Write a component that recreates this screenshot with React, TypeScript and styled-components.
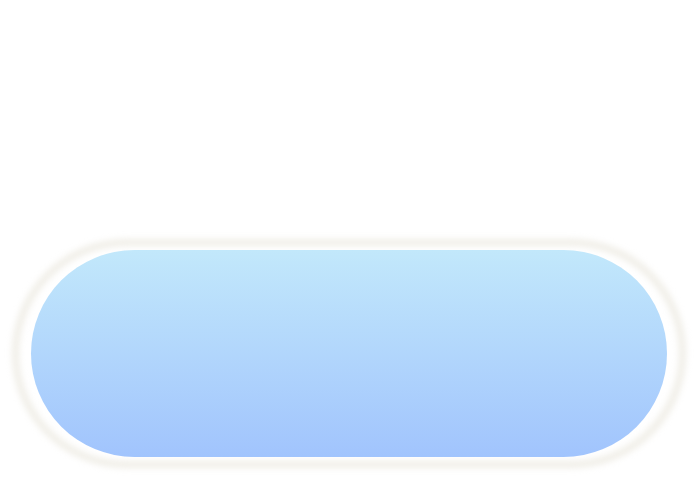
import React from "react";
import styled, { createGlobalStyle } from "styled-components";

const Global = createGlobalStyle`
  html, body { margin: 0; padding: 0; background: #ffffff; }
  body { font-family: "Liberation Sans", Arial, sans-serif; }
`;

const Page = styled.div`
  width: 700px;
  height: 500px;
  box-sizing: border-box;
  padding: 243px 18px 0 16px;
  display: flex;
  flex-direction: column;
`;

const Frame = styled.div`
  position: relative;
  display: flex;
  padding: 7px 15px;

  &::before {
    content: "";
    position: absolute;
    inset: -4px;
    border: 7px solid rgba(230, 228, 216, 0.62);
    border-radius: 9999px;
    filter: blur(3px);
    pointer-events: none;
  }
`;

const Pill = styled.div`
  position: relative;
  flex: 1;
  height: 207px;
  border-radius: 104px;
  background: linear-gradient(to bottom, #c2e8fb 0%, #a1c4fd 100%);
`;

export default function App() {
  return (
    <>
      <Global />
      <Page>
        <Frame>
          <Pill />
        </Frame>
      </Page>
    </>
  );
}
